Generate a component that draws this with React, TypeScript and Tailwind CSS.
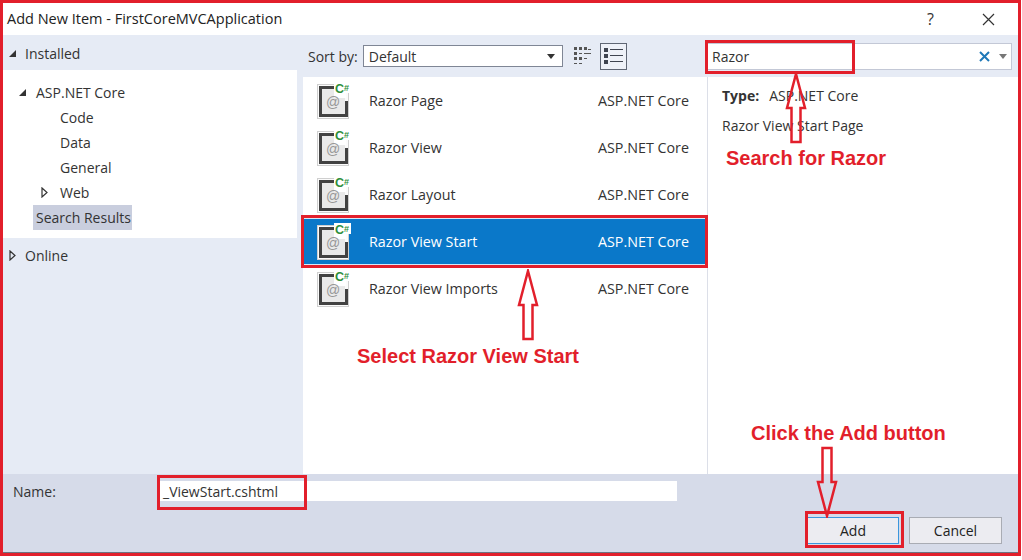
import React from 'react';

const templates = ['Razor Page', 'Razor View', 'Razor Layout', 'Razor View Start', 'Razor View Imports'];

function TemplateIcon() {
  return (
    <svg width="36" height="38" viewBox="0 0 36 38" className="shrink-0">
      <rect x="0.5" y="2.5" width="31" height="34" fill="#fbfbfb" stroke="#cfcfcf" />
      <rect x="5" y="7" width="23" height="26" fill="#e9e9e9" />
      <path d="M19 5.5H3.5V33.5H29.5V19" fill="none" stroke="#424242" strokeWidth="3" />
      <path d="M17 0h17v11H29v5H17z" fill="#fff" />
      <text x="18" y="10.5" fontFamily="Liberation Sans" fontWeight="700" fontSize="12.5" fill="#2f8f3a">C</text>
      <text x="27" y="9" fontFamily="Liberation Sans" fontWeight="700" fontSize="9" fill="#2f8f3a">#</text>
      <text x="16" y="25" textAnchor="middle" fontFamily="Liberation Sans" fontSize="14" fill="#979797">@</text>
    </svg>
  );
}

function TemplateRow({ name, selected }: { name: string; selected: boolean }) {
  return (
    <div
      className={`flex h-[47px] items-center border pl-[13px] pr-[17px] text-[14.3px] ${
        selected ? 'border-[#d8e8f5] bg-[#0a78c9] text-white' : 'border-transparent text-[#333]'
      }`}
    >
      <TemplateIcon />
      <span className="ml-[16px] flex-1 pt-[1px]">{name}</span>
      <span className="pt-[1px]">ASP.NET Core</span>
    </div>
  );
}

function TreeRow({ label, indent, caret, active }: { label: string; indent: string; caret?: React.ReactNode; active?: boolean }) {
  return (
    <div className={`flex h-[25px] items-center ${indent}`}>
      {caret}
      <span className={active ? 'w-[99px] bg-[#c9cede] pl-[3px] leading-[25px]' : ''}>{label}</span>
    </div>
  );
}

function CaretOpen() {
  return (
    <svg width="9" height="9" viewBox="0 0 9 9" className="shrink-0">
      <path d="M8 1v7H1z" fill="#333" />
    </svg>
  );
}

function CaretClosed() {
  return (
    <svg width="7" height="11" viewBox="0 0 7 11" className="shrink-0">
      <path d="M1 1l5 4.5L1 10z" fill="none" stroke="#333" strokeWidth="1.2" />
    </svg>
  );
}

function HollowArrow({ className, flip }: { className: string; flip?: boolean }) {
  return (
    <svg width="22" height="72" viewBox="0 0 22 72" className={`absolute ${className} ${flip ? 'rotate-180' : ''}`}>
      <path d="M11 2L20 36H15.5V70H6.5V36H2z" fill="none" stroke="#e21f2b" strokeWidth="2.5" />
    </svg>
  );
}

export default function App() {
  return (
    <div className="relative h-[560px] w-[1022px] bg-white font-['Open_Sans',_'Noto_Sans',_sans-serif] text-[14px] text-[#333]">
      <div className="flex h-[556px] w-[1021px] flex-col border-[3px] border-[#e21f2b] bg-white">
        <div className="flex h-[32px] shrink-0 items-center justify-between pl-[4px] pr-[23px]">
          <span className="text-[14.5px] text-[#222]">Add New Item - FirstCoreMVCApplication</span>
          <div className="flex items-center gap-[48px]">
            <span className="text-[16px]">?</span>
            <svg width="13" height="13" viewBox="0 0 13 13">
              <path d="M1 1l11 11M12 1L1 12" stroke="#333" strokeWidth="1.2" />
            </svg>
          </div>
        </div>

        <div className="flex min-h-0 flex-1 bg-[#e6ebf5]">
          <div className="w-[300px] shrink-0">
            <div className="flex h-[37px] items-center gap-[8px] pb-[1px] pl-[5px]">
              <CaretOpen />
              <span>Installed</span>
            </div>
            <div className="-mt-[2px] w-[294px] bg-white pb-[8px] pt-[10px]">
              <TreeRow label="ASP.NET Core" indent="pl-[15px] gap-[9px]" caret={<CaretOpen />} />
              <TreeRow label="Code" indent="pl-[57px]" />
              <TreeRow label="Data" indent="pl-[57px]" />
              <TreeRow label="General" indent="pl-[57px]" />
              <TreeRow label="Web" indent="pl-[38px] gap-[12px]" caret={<CaretClosed />} />
              <TreeRow label="Search Results" indent="pl-[30px]" active />
            </div>
            <div className="mt-[5px] flex h-[25px] items-center gap-[9px] pl-[6px]">
              <CaretClosed />
              <span>Online</span>
            </div>
          </div>

          <div className="flex w-[404px] shrink-0 flex-col">
            <div className="flex h-[42px] shrink-0 items-center pl-[5px]">
              <span>Sort by:</span>
              <div className="ml-[5px] flex h-[22px] w-[200px] items-center justify-between border border-[#7f8695] bg-white pl-[5px] pr-[7px]">
                <span>Default</span>
                <svg width="8" height="5" viewBox="0 0 8 5">
                  <path d="M0 0h8L4 5z" fill="#333" />
                </svg>
              </div>
              <svg width="18" height="20" viewBox="0 0 18 20" className="ml-[10px] text-[#555]">
                <path
                  fill="currentColor"
                  d="M1 1h3v3H1zM6 1h3v3H6zM11 1h3v3h-3zM15 3h3v1h-3zM1 6h3v3H1zM6 7h3v1H6zM11 7h7v1h-7zM1 11h3v3H1zM6 11h3v3H6zM11 12h3v1h-3zM1 17h3v1H1zM6 17h3v1H6z"
                />
              </svg>
              <div className="ml-[9px] flex h-[27px] w-[27px] items-center justify-center border border-[#5f6674] bg-[#eef1f8]">
                <svg width="19" height="17" viewBox="0 0 19 17">
                  <path
                    fill="#3f4450"
                    d="M0 0h4v4H0zM6 1h13v1H6zM0 6h4v4H0zM6 7h13v1H6zM0 12h4v4H0zM6 13h13v1H6z"
                  />
                </svg>
              </div>
            </div>
            <div className="flex-1 bg-white">
              {templates.map((name) => (
                <TemplateRow key={name} name={name} selected={name === 'Razor View Start'} />
              ))}
            </div>
          </div>

          <div className="flex min-w-0 flex-1 flex-col">
            <div className="flex h-[42px] shrink-0 items-center pr-[3px]">
              <div className="flex h-[27px] w-[305px] items-center justify-between border border-[#c3c8d6] bg-white pl-[4px] pr-[4px]">
                <span>Razor</span>
                <div className="flex items-center gap-[9px]">
                  <svg width="11" height="11" viewBox="0 0 11 11">
                    <path d="M1 1l9 9M10 1l-9 9" stroke="#1e78b8" strokeWidth="2" />
                  </svg>
                  <svg width="8" height="5" viewBox="0 0 8 5">
                    <path d="M0 0h8L4 5z" fill="#777" />
                  </svg>
                </div>
              </div>
            </div>
            <div className="flex-1 border-l border-[#dcdfe8] bg-white pl-[14px] pt-[7px]">
              <div className="flex h-[22px] items-center gap-[10px]">
                <span className="font-bold">Type:</span>
                <span>ASP.NET Core</span>
              </div>
              <div className="mt-[9px] leading-[22px]">Razor View Start Page</div>
            </div>
          </div>
        </div>

        <div className="relative flex h-[79px] shrink-0 flex-col border-b border-[#6d7280] bg-[#d6dbe9] pl-[10px] pr-[16px] pt-[7px]">
          <div className="flex h-[20px] items-center">
            <span className="w-[147px]">Name:</span>
            <div className="flex h-[20px] w-[517px] items-center bg-white pl-[3px]">_ViewStart.cshtml</div>
          </div>
          <div className="mt-[16px] flex justify-end gap-[10px]">
            <button className="h-[27px] w-[92px] border border-[#3a96dd] bg-[#ececf1] text-[#222]">Add</button>
            <button className="h-[27px] w-[93px] border border-[#a9acb4] bg-[#ececf1] text-[#222]">Cancel</button>
          </div>
        </div>
      </div>

      {/* red annotations on top of the dialog */}
      <div className="absolute left-[705px] top-[40px] h-[34px] w-[150px] border-[3px] border-[#e21f2b]" />
      <div className="absolute left-[301px] top-[215px] h-[53px] w-[407px] border-[3px] border-[#e21f2b]" />
      <div className="absolute left-[157px] top-[475px] h-[35px] w-[150px] border-[3px] border-[#e21f2b]" />
      <div className="absolute left-[805px] top-[511px] h-[37px] w-[99px] border-[3px] border-[#e21f2b]" />
      <HollowArrow className="left-[785px] top-[72px]" />
      <HollowArrow className="left-[517px] top-[269px]" />
      <HollowArrow flip className="left-[816px] top-[446px]" />
      <span className="absolute left-[726px] top-[146px] font-['Liberation_Sans',_sans-serif] text-[20px] font-bold leading-[24px] text-[#e21f2b]">
        Search for Razor
      </span>
      <span className="absolute left-[357px] top-[344px] font-['Liberation_Sans',_sans-serif] text-[20px] font-bold leading-[24px] text-[#e21f2b]">
        Select Razor View Start
      </span>
      <span className="absolute left-[751px] top-[421px] font-['Liberation_Sans',_sans-serif] text-[20px] font-bold leading-[24px] text-[#e21f2b]">
        Click the Add button
      </span>
    </div>
  );
}
